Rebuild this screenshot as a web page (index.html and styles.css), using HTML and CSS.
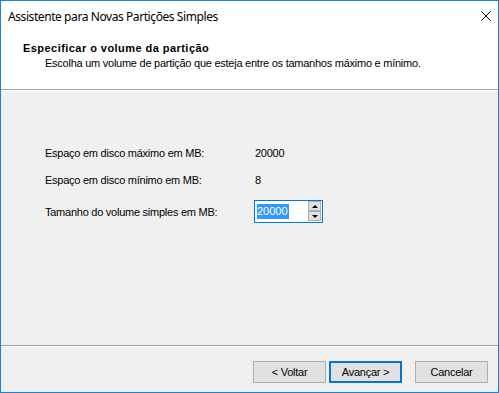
FILE: index.html
```html
<!DOCTYPE html>
<html lang="pt-BR">
<head>
    <meta charset="UTF-8">
    <title>Assistente para Novas Partições Simples</title>
    <link rel="stylesheet" href="styles.css">
</head>
<body>

    <div class="window">

        <!-- Title bar -->
        <div class="titlebar">
            <span class="title">Assistente para Novas Partições Simples</span>
            <span class="close">
                <svg width="10" height="10" viewBox="0 0 10 10">
                    <path d="M0.5 0.5 L9.5 9.5 M9.5 0.5 L0.5 9.5" stroke="#000" stroke-width="1"/>
                </svg>
            </span>
        </div>

        <!-- Wizard header -->
        <div class="header">
            <h1>Especificar o volume da partição</h1>
            <p>Escolha um volume de partição que esteja entre os tamanhos máximo e mínimo.</p>
        </div>

        <!-- Page content -->
        <div class="content">
            <div class="row">
                <span class="label">Espaço em disco máximo em MB:</span>
                <span class="value">20000</span>
            </div>
            <div class="row">
                <span class="label">Espaço em disco mínimo em MB:</span>
                <span class="value">8</span>
            </div>
            <div class="row row-input">
                <span class="label">Tamanho do volume simples em MB:</span>
                <div class="spin">
                    <div class="spin-box"><span class="selected">20000</span></div>
                    <div class="spin-buttons">
                        <div class="spin-btn"><span class="arrow-up"></span></div>
                        <div class="spin-btn"><span class="arrow-down"></span></div>
                    </div>
                </div>
            </div>
        </div>

        <!-- Buttons -->
        <div class="footer">
            <button class="btn">&lt; Voltar</button>
            <button class="btn btn-default">Avançar &gt;</button>
            <button class="btn btn-cancel">Cancelar</button>
        </div>
    </div>

</body>
</html>
```

FILE: styles.css
```css
body {
    margin: 0;
    font-family: 'Liberation Sans', Arial, sans-serif;
    font-size: 11px;
    letter-spacing: -0.25px;
    color: #000;
}
.window {
    width: 499px;
    height: 393px;
    box-sizing: border-box;
    border: 1px solid #1883d7;
    background-color: #f0f0f0;
    display: flex;
    flex-direction: column;
}
.titlebar {
    height: 30px;
    background-color: #fff;
    display: flex;
    align-items: center;
    justify-content: space-between;
    padding: 0 0 0 7px;
}
.titlebar .title {
    font-family: 'Noto Sans', 'Open Sans', sans-serif;
    font-size: 12px;
    letter-spacing: -0.42px;
    margin-top: 1px;
}
.close {
    width: 24px;
    height: 30px;
    display: flex;
    align-items: center;
    justify-content: center;
}
.close svg {
    display: block;
}
.header {
    background-color: #fff;
    height: 59px;
    box-sizing: border-box;
    padding: 10px 0 0 22px;
    border-bottom: 1px solid #a0a0a0;
}
.header h1 {
    margin: 0;
    font-size: 11px;
    font-weight: bold;
    letter-spacing: 0.45px;
    line-height: 14px;
}
.header p {
    margin: 1px 0 0 22px;
    line-height: 14px;
}
/* Body of the wizard page */
.content {
    flex: 1;
    border-top: 1px solid #fff;
    border-bottom: 1px solid #a0a0a0;
    padding: 55px 0 0 44px;
}
.row {
    display: flex;
    align-items: center;
    height: 14px;
    margin-bottom: 13px;
}
.row .label {
    width: 210px;
}
.row-input {
    height: 23px;
    margin-top: 13px;
}
.spin {
    display: flex;
    margin-left: -1px;
}
.spin-box {
    width: 53px;
    height: 23px;
    box-sizing: border-box;
    border: 1px solid #0078d7;
    border-right: none;
    background-color: #fff;
    padding: 3px 0 0 2px;
}
.selected {
    background-color: #3399ff;
    color: #fff;
    line-height: 15px;
    display: inline-block;
    padding-right: 1px;
    letter-spacing: 0;
}
.spin-buttons {
    display: flex;
    flex-direction: column;
    border: 1px solid #0078d7;
    border-left: none;
    background-color: #fff;
    padding: 0 1px 0 1px;
    height: 23px;
    box-sizing: border-box;
}
.spin-btn {
    width: 13px;
    height: 10px;
    box-sizing: border-box;
    border: 1px solid #adadad;
    background-color: #e1e1e1;
    display: flex;
    align-items: center;
    justify-content: center;
}
.arrow-up {
    border-left: 3px solid transparent;
    border-right: 3px solid transparent;
    border-bottom: 3px solid #000;
}
.arrow-down {
    border-left: 3px solid transparent;
    border-right: 3px solid transparent;
    border-top: 3px solid #000;
}
.footer {
    height: 46px;
    border-top: 1px solid #fff;
    display: flex;
    justify-content: flex-end;
    align-items: flex-start;
    padding: 14px 10px 0 0;
    box-sizing: border-box;
}
.btn {
    width: 73px;
    height: 22px;
    box-sizing: border-box;
    background-color: #e1e1e1;
    border: 1px solid #adadad;
    font-family: 'Liberation Sans', Arial, sans-serif;
    font-size: 11px;
    letter-spacing: -0.25px;
    color: #000;
    padding: 0;
    margin-left: 3px;
}
.btn-default {
    border: 2px solid #0078d7;
}
.btn-cancel {
    margin-left: 13px;
}
```
